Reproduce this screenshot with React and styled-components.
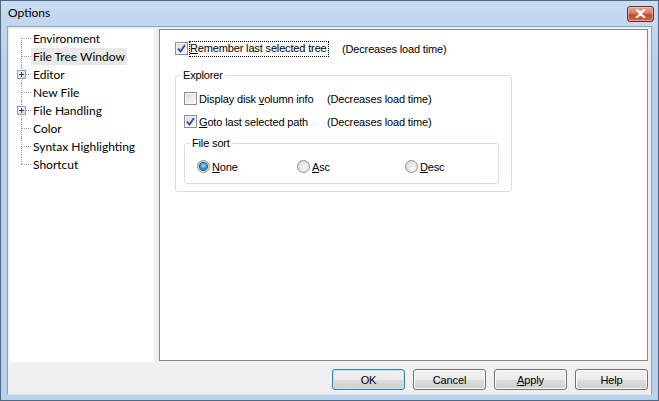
import React from "react";
import styled, { createGlobalStyle } from "styled-components";

const GlobalStyle = createGlobalStyle`
  html, body {
    margin: 0;
    padding: 0;
    overflow: hidden;
    background: #ffffff;
  }
  * {
    box-sizing: border-box;
  }
`;

const Window = styled.div`
  width: 659px;
  height: 401px;
  display: flex;
  flex-direction: column;
  border: 1px solid #4f6782;
  padding: 0 6px 5px;
  background: linear-gradient(#c8dcf2, #b9d1ea 60px, #b9d1ea);
  font-family: "Liberation Sans", Arial, sans-serif;
  font-size: 11px;
  letter-spacing: -0.15px;
  color: #000;
`;

const TitleBar = styled.div`
  height: 25px;
  display: flex;
  align-items: center;
  justify-content: space-between;
  padding: 0 0 2px 1px;
`;

const Title = styled.span`
  font-family: Lato, "Open Sans", sans-serif;
  font-size: 12px;
  letter-spacing: 0;
  color: #000;
`;

const CloseButton = styled.div`
  width: 27px;
  height: 16px;
  margin-right: -2px;
  margin-top: 2px;
  border: 1px solid #6d2a22;
  border-radius: 3px;
  background: linear-gradient(#e9a998, #d57a66 45%, #c2472f 55%, #cf6a50);
  box-shadow: inset 0 0 0 1px rgba(255, 220, 210, 0.5);
  display: flex;
  align-items: center;
  justify-content: center;
`;

const Body = styled.div`
  flex: 1;
  display: flex;
  flex-direction: column;
  background: #f0f0f0;
  border: 1px solid #8aa2bf;
  border-bottom-color: #d9e6f4;
  padding: 2px 3px 0 1px;
`;

const MainRow = styled.div`
  display: flex;
  gap: 5px;
  height: 333px;
  align-items: flex-start;
`;

const TreePanel = styled.div`
  width: 145px;
  height: 333px;
  background: #ffffff;
  display: flex;
  flex-direction: column;
  font-family: Lato, "Open Sans", sans-serif;
  font-size: 12px;
  letter-spacing: 0;
`;

const TreeRow = styled.div`
  height: 18px;
  display: flex;
  align-items: center;
`;

const Gutter = styled.span`
  position: relative;
  width: 22px;
  height: 18px;
  flex: none;

  &::before {
    content: "";
    position: absolute;
    left: 12px;
    top: ${(p) => (p.$first ? "9px" : "0")};
    bottom: ${(p) => (p.$last ? "9px" : "0")};
    border-left: 1px dotted #a0a0a0;
  }

  &::after {
    content: "";
    position: absolute;
    left: 12px;
    right: 0;
    top: 9px;
    border-top: 1px dotted #a0a0a0;
  }
`;

const Expander = styled.svg`
  position: absolute;
  left: 8px;
  top: 5px;
  z-index: 1;
`;

const TreeLabel = styled.span`
  height: 17px;
  line-height: 17px;
  padding: 0 2px;
  background: ${(p) => (p.$selected ? "#e8e8e8" : "transparent")};
  white-space: nowrap;
`;

const Page = styled.div`
  flex: 1;
  height: 332px;
  background: #ffffff;
  border: 1px solid #828790;
  padding: 11px 15px;
  display: flex;
  flex-direction: column;
  align-items: flex-start;
`;

const OptionRow = styled.div`
  display: flex;
  align-items: center;
  height: 15px;
`;

const CheckLabel = styled.label`
  display: flex;
  align-items: center;
  gap: 2px;
  width: ${(p) => p.$width}px;
  flex: none;
  white-space: nowrap;
`;

const Box = styled.span`
  width: 13px;
  height: 13px;
  flex: none;
  border: 1px solid #8e8f8f;
  background: linear-gradient(135deg, #d6d6d6, #f2f2f2 70%, #fafafa);
  box-shadow: inset 0 0 0 1px #f4f4f4;
  display: flex;
  align-items: center;
  justify-content: center;
`;

const Focus = styled.span`
  outline: 1px dotted #000;
  outline-offset: 0;
  padding: 0 1px 1px 0;
  line-height: 13px;
`;

const Note = styled.span`
  white-space: nowrap;
`;

const Mn = styled.span`
  text-decoration: underline;
  text-underline-offset: 1px;
`;

const Group = styled.fieldset`
  margin: ${(p) => p.$top}px 0 0;
  width: ${(p) => p.$width}px;
  min-width: 0;
  border: 1px solid #d5dfe5;
  border-radius: 3px;
  padding: 9px 8px ${(p) => p.$bottom}px;
  display: flex;
  flex-direction: column;
  gap: 8px;
`;

const Legend = styled.legend`
  padding: 0 2px;
  margin-left: -3px;
  line-height: 13px;
  height: 13px;
`;

const RadioRow = styled.div`
  display: grid;
  grid-template-columns: 100px 108px auto;
  height: 15px;
  align-items: center;
  padding-left: 4px;
`;

const RadioLabel = styled.label`
  display: flex;
  align-items: center;
  gap: 2px;
`;

const Radio = styled.span`
  width: 13px;
  height: 13px;
  border-radius: 50%;
  border: 1px solid #8e8f8f;
  background: radial-gradient(circle at 65% 65%, #f6f6f6, #e2e2e2 60%, #cfcfcf);
  display: flex;
  align-items: center;
  justify-content: center;

  &::after {
    content: "";
    display: ${(p) => (p.$checked ? "block" : "none")};
    width: 7px;
    height: 7px;
    border-radius: 50%;
    background: radial-gradient(circle at 50% 40%, #9fe0ff, #2c8ad8 55%, #164f8f);
    box-shadow: 0 0 0 1px #1d4f85;
  }
`;

const ButtonRow = styled.div`
  display: flex;
  justify-content: flex-end;
  gap: 8px;
  margin-top: 7px;
`;

const Button = styled.div`
  width: 73px;
  height: 21px;
  border: 1px solid ${(p) => (p.$default ? "#3c7fb1" : "#707070")};
  border-radius: 3px;
  background: linear-gradient(#f2f2f2, #ebebeb 50%, #dddddd 51%, #cfcfcf);
  box-shadow: inset 0 0 0 1px ${(p) => (p.$default ? "#bfe6f8" : "#fbfbfb")};
  display: flex;
  align-items: center;
  justify-content: center;
`;

const tree = [
  { label: "Environment" },
  { label: "File Tree Window", selected: true },
  { label: "Editor", expandable: true },
  { label: "New File" },
  { label: "File Handling", expandable: true },
  { label: "Color" },
  { label: "Syntax Highlighting" },
  { label: "Shortcut" },
];

const Check = () => (
  <svg width="9" height="9" viewBox="0 0 9 9">
    <path d="M1 4.5 L3.5 7.5 L8 1" fill="none" stroke="#2a4aa8" strokeWidth="1.8" />
  </svg>
);

const Checkbox = ({ checked }) => <Box>{checked && <Check />}</Box>;

const Plus = () => (
  <Expander width="9" height="9" viewBox="0 0 9 9">
    <defs>
      <linearGradient id="pg" x1="0" y1="0" x2="1" y2="1">
        <stop offset="0" stopColor="#ffffff" />
        <stop offset="1" stopColor="#c9d3de" />
      </linearGradient>
    </defs>
    <rect x="0.5" y="0.5" width="8" height="8" fill="url(#pg)" stroke="#8e9fb3" />
    <path d="M2 4.5 H7 M4.5 2 V7" stroke="#1f3c88" strokeWidth="1" />
  </Expander>
);

const App = () => {
  return (
    <>
      <GlobalStyle />
      <Window>
        <TitleBar>
          <Title>Options</Title>
          <CloseButton>
            <svg width="11" height="9" viewBox="0 0 11 9">
              <path
                d="M1 0.5 L5.5 3.5 L10 0.5 M1 8.5 L5.5 5.5 L10 8.5 M1.5 0.5 L9.5 8.5 M9.5 0.5 L1.5 8.5"
                stroke="#ffffff"
                strokeWidth="2"
                fill="none"
              />
            </svg>
          </CloseButton>
        </TitleBar>
        <Body>
          <MainRow>
            <TreePanel>
              {tree.map((item, i) => (
                <TreeRow key={item.label}>
                  <Gutter $first={i === 0} $last={i === tree.length - 1}>
                    {item.expandable && <Plus />}
                  </Gutter>
                  <TreeLabel $selected={item.selected}>{item.label}</TreeLabel>
                </TreeRow>
              ))}
            </TreePanel>
            <Page>
              <OptionRow>
                <CheckLabel $width={167}>
                  <Checkbox checked />
                  <Focus>
                    <Mn>R</Mn>emember last selected tree
                  </Focus>
                </CheckLabel>
                <Note>(Decreases load time)</Note>
              </OptionRow>
              <Group $top={13} $width={337} $bottom={7}>
                <Legend>Explorer</Legend>
                <OptionRow>
                  <CheckLabel $width={143}>
                    <Checkbox />
                    <span>
                      Display disk <Mn>v</Mn>olumn info
                    </span>
                  </CheckLabel>
                  <Note>(Decreases load time)</Note>
                </OptionRow>
                <OptionRow>
                  <CheckLabel $width={143}>
                    <Checkbox checked />
                    <span>
                      <Mn>G</Mn>oto last selected path
                    </span>
                  </CheckLabel>
                  <Note>(Decreases load time)</Note>
                </OptionRow>
                <Group $top={0} $width={315} $bottom={9}>
                  <Legend>File sort</Legend>
                  <RadioRow>
                    <RadioLabel>
                      <Radio $checked />
                      <span>
                        <Mn>N</Mn>one
                      </span>
                    </RadioLabel>
                    <RadioLabel>
                      <Radio />
                      <span>
                        <Mn>A</Mn>sc
                      </span>
                    </RadioLabel>
                    <RadioLabel>
                      <Radio />
                      <span>
                        <Mn>D</Mn>esc
                      </span>
                    </RadioLabel>
                  </RadioRow>
                </Group>
              </Group>
            </Page>
          </MainRow>
          <ButtonRow>
            <Button $default>OK</Button>
            <Button>Cancel</Button>
            <Button>
              <span>
                <Mn>A</Mn>pply
              </span>
            </Button>
            <Button>Help</Button>
          </ButtonRow>
        </Body>
      </Window>
    </>
  );
};

export default App;
